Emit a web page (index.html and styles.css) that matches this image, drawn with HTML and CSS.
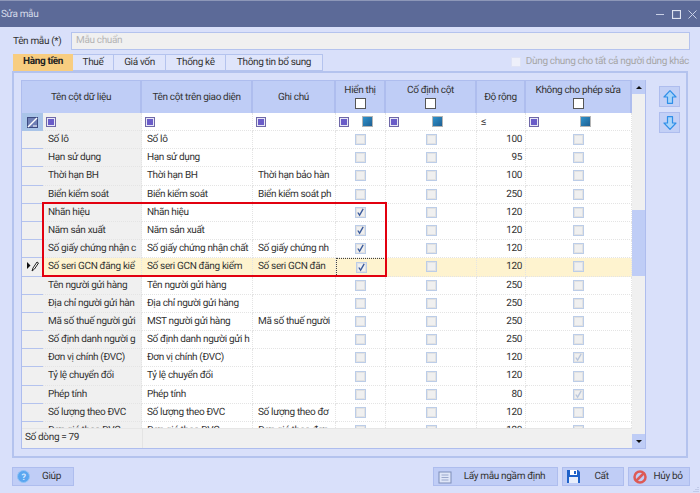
FILE: index.html
```html
<!DOCTYPE html>
<html lang="vi">
<head>
  <meta charset="UTF-8">
  <title>Sửa mẫu</title>
  <link rel="stylesheet" href="styles.css">
</head>
<body>
  <svg class="defs" width="0" height="0">
    <symbol id="i-check" viewBox="0 0 10 10"><path d="M2 5l2 3 4-7" fill="none" stroke="currentColor" stroke-width="1.5"/></symbol>
    <symbol id="i-up" viewBox="0 0 14 14"><path d="M7 .7L1 7h3.500v6.300h5V7H13z" fill="#a9d4fa" stroke="#2f8fe8" stroke-width="1.200" stroke-linejoin="round"/></symbol>
    <symbol id="i-down" viewBox="0 0 14 14"><path d="M7 13.300L1 7h3.500V.7h5V7H13z" fill="#a9d4fa" stroke="#2f8fe8" stroke-width="1.200" stroke-linejoin="round"/></symbol>
  </svg>

  <div class="window">
    <div class="titlebar">
      <span>Sửa mẫu</span>
      <div class="winbtns">
        <svg width="9" height="9" viewBox="0 0 9 9"><path d="M0 4.500h8" stroke="#c9d0e6" stroke-width="1"/></svg>
        <svg width="9" height="9" viewBox="0 0 9 9"><rect x=".5" y=".5" width="8" height="8" fill="none" stroke="#dfe3f0" stroke-width="1.200"/></svg>
        <svg width="9" height="9" viewBox="0 0 9 9"><path d="M.5.5l8 8M8.500.5l-8 8" stroke="#c9d0e6" stroke-width="1"/></svg>
      </div>
    </div>

    <div class="content">
      <div class="name-row">
        <label>Tên mẫu (*)</label>
        <div class="name-input">Mẫu chuẩn</div>
      </div>

      <div class="tab-row">
        <div class="tabs">
          <div class="tab tab-on">Hàng tiền</div>
          <div class="tab t2">Thuế</div>
          <div class="tab t3">Giá vốn</div>
          <div class="tab t4">Thống kê</div>
          <div class="tab t5">Thông tin bổ sung</div>
        </div>
        <div class="share"><span class="share-box"></span>Dùng chung cho tất cả người dùng khác</div>
      </div>

      <div class="panel">
        <div class="grid">
          <div class="grid-main">
            <div class="row-head">
              <div class="hc span2">Tên cột dữ liệu</div>
              <div class="hc">Tên cột trên giao diện</div>
              <div class="hc">Ghi chú</div>
              <div class="hc">Hiển thị<span class="head-box"></span></div>
              <div class="hc">Cố định cột<span class="head-box"></span></div>
              <div class="hc">Độ rộng</div>
              <div class="hc">Không cho phép sửa<span class="head-box"></span></div>
            </div>

            <div class="row-filter">
              <div class="fc-ind"><svg width="11" height="11" viewBox="0 0 11 11"><rect x=".5" y=".5" width="10" height="10" fill="#6f7fb5" stroke="#3c4a80"/><path d="M1 10L10 1" stroke="#fff" stroke-width="1.400"/><path d="M6 9h4" stroke="#fff"/></svg></div>
              <div class="fc"><span class="fi"></span></div>
              <div class="fc"><span class="fi"></span></div>
              <div class="fc"><span class="fi"></span></div>
              <div class="fc fc-two"><span class="fi"></span><span class="fb"></span></div>
              <div class="fc fc-two fc-five"><span class="fi"></span><span class="fb"></span></div>
              <div class="fc fc-le">≤</div>
              <div class="fc fc-two fc-seven"><span class="fi"></span><span class="fb"></span></div>
            </div>

            <div class="rows">
              <div class="row"><div class="ind"></div><div class="c c1">Số lô</div><div class="c">Số lô</div><div class="c"></div><div class="c cc"><i class="cb"></i></div><div class="c cc"><i class="cb"></i></div><div class="c num">100</div><div class="c cc"><i class="cb"></i></div></div>
              <div class="row"><div class="ind"></div><div class="c c1">Hạn sử dụng</div><div class="c">Hạn sử dụng</div><div class="c"></div><div class="c cc"><i class="cb"></i></div><div class="c cc"><i class="cb"></i></div><div class="c num">95</div><div class="c cc"><i class="cb"></i></div></div>
              <div class="row"><div class="ind"></div><div class="c c1">Thời hạn BH</div><div class="c">Thời hạn BH</div><div class="c">Thời hạn bảo hàn</div><div class="c cc"><i class="cb"></i></div><div class="c cc"><i class="cb"></i></div><div class="c num">100</div><div class="c cc"><i class="cb"></i></div></div>
              <div class="row"><div class="ind"></div><div class="c c1">Biển kiểm soát</div><div class="c">Biển kiểm soát</div><div class="c">Biển kiểm soát ph</div><div class="c cc"><i class="cb"></i></div><div class="c cc"><i class="cb"></i></div><div class="c num">250</div><div class="c cc"><i class="cb"></i></div></div>
              <div class="row"><div class="ind"></div><div class="c c1">Nhãn hiệu</div><div class="c">Nhãn hiệu</div><div class="c"></div><div class="c cc"><i class="cb on"><svg><use href="#i-check"/></svg></i></div><div class="c cc"><i class="cb"></i></div><div class="c num">120</div><div class="c cc"><i class="cb"></i></div></div>
              <div class="row"><div class="ind"></div><div class="c c1">Năm sản xuất</div><div class="c">Năm sản xuất</div><div class="c"></div><div class="c cc"><i class="cb on"><svg><use href="#i-check"/></svg></i></div><div class="c cc"><i class="cb"></i></div><div class="c num">120</div><div class="c cc"><i class="cb"></i></div></div>
              <div class="row"><div class="ind"></div><div class="c c1">Số giấy chứng nhận c</div><div class="c">Số giấy chứng nhận chất</div><div class="c">Số giấy chứng nh</div><div class="c cc"><i class="cb on"><svg><use href="#i-check"/></svg></i></div><div class="c cc"><i class="cb"></i></div><div class="c num">120</div><div class="c cc"><i class="cb"></i></div></div>
              <div class="row row-sel"><div class="ind"><svg width="12" height="11" viewBox="0 0 12 11"><path d="M0 1l3.500 3.500L0 8z" fill="#111"/><path d="M5 10l1-3 4-6 1.500 1-4 6z" fill="#fff" stroke="#222"/></svg></div><div class="c c1">Số seri GCN đăng kiể</div><div class="c">Số seri GCN đăng kiểm</div><div class="c">Số seri GCN đăn</div><div class="c cc c-focus"><i class="cb on"><svg><use href="#i-check"/></svg></i></div><div class="c cc"><i class="cb"></i></div><div class="c num">120</div><div class="c cc"><i class="cb"></i></div></div>
              <div class="row"><div class="ind"></div><div class="c c1">Tên người gửi hàng</div><div class="c">Tên người gửi hàng</div><div class="c"></div><div class="c cc"><i class="cb"></i></div><div class="c cc"><i class="cb"></i></div><div class="c num">250</div><div class="c cc"><i class="cb"></i></div></div>
              <div class="row"><div class="ind"></div><div class="c c1">Địa chỉ người gửi hàn</div><div class="c">Địa chỉ người gửi hàng</div><div class="c"></div><div class="c cc"><i class="cb"></i></div><div class="c cc"><i class="cb"></i></div><div class="c num">250</div><div class="c cc"><i class="cb"></i></div></div>
              <div class="row"><div class="ind"></div><div class="c c1">Mã số thuế người gửi</div><div class="c">MST người gửi hàng</div><div class="c">Mã số thuế người</div><div class="c cc"><i class="cb"></i></div><div class="c cc"><i class="cb"></i></div><div class="c num">250</div><div class="c cc"><i class="cb"></i></div></div>
              <div class="row"><div class="ind"></div><div class="c c1">Số định danh người g</div><div class="c">Số định danh người gửi h</div><div class="c"></div><div class="c cc"><i class="cb"></i></div><div class="c cc"><i class="cb"></i></div><div class="c num">250</div><div class="c cc"><i class="cb"></i></div></div>
              <div class="row"><div class="ind"></div><div class="c c1">Đơn vị chính (ĐVC)</div><div class="c">Đơn vị chính (ĐVC)</div><div class="c"></div><div class="c cc"><i class="cb"></i></div><div class="c cc"><i class="cb"></i></div><div class="c num">120</div><div class="c cc"><i class="cb off"><svg><use href="#i-check"/></svg></i></div></div>
              <div class="row"><div class="ind"></div><div class="c c1">Tỷ lệ chuyển đổi</div><div class="c">Tỷ lệ chuyển đổi</div><div class="c"></div><div class="c cc"><i class="cb"></i></div><div class="c cc"><i class="cb"></i></div><div class="c num">120</div><div class="c cc"><i class="cb"></i></div></div>
              <div class="row"><div class="ind"></div><div class="c c1">Phép tính</div><div class="c">Phép tính</div><div class="c"></div><div class="c cc"><i class="cb"></i></div><div class="c cc"><i class="cb"></i></div><div class="c num">80</div><div class="c cc"><i class="cb off"><svg><use href="#i-check"/></svg></i></div></div>
              <div class="row"><div class="ind"></div><div class="c c1">Số lượng theo ĐVC</div><div class="c">Số lượng theo ĐVC</div><div class="c">Số lượng theo đơ</div><div class="c cc"><i class="cb"></i></div><div class="c cc"><i class="cb"></i></div><div class="c num">120</div><div class="c cc"><i class="cb"></i></div></div>
              <div class="row"><div class="ind"></div><div class="c c1">Đơn giá theo ĐVC</div><div class="c">Đơn giá theo ĐVC</div><div class="c">Đơn giá theo đơn</div><div class="c cc"><i class="cb"></i></div><div class="c cc"><i class="cb"></i></div><div class="c num">120</div><div class="c cc"><i class="cb"></i></div></div>
            </div>

            <div class="row-foot">
              <div class="foot-count">Số dòng = 79</div>
            </div>
          </div>

          <div class="scroll">
            <div class="sb-btn"><span class="tri-up"></span></div>
            <div class="sb-track"><div class="sb-thumb"></div></div>
            <div class="sb-btn"><span class="tri-down"></span></div>
          </div>

          <!-- khung đỏ đánh dấu 4 dòng -->
          <div class="red-mark"></div>
        </div>

        <div class="move-btns">
          <div class="move-btn"><svg width="14" height="14"><use href="#i-up"/></svg></div>
          <div class="move-btn"><svg width="14" height="14"><use href="#i-down"/></svg></div>
        </div>
      </div>

      <div class="bottom">
        <div class="btn btn-help">
          <svg width="13" height="13" viewBox="0 0 13 13"><circle cx="6.500" cy="6.500" r="6" fill="#5aa6f0" stroke="#8fc2f5"/><text x="6.500" y="10" text-anchor="middle" class="q-mark">?</text></svg>
          <span>Giúp</span>
        </div>
        <div class="bottom-right">
          <div class="btn btn-default">
            <svg width="14" height="14" viewBox="0 0 14 14"><rect x="1" y="2" width="12" height="11" fill="#dfe6f8" stroke="#7d8db8"/><path d="M3.500 5h7M3.500 7.500h7M3.500 10h7" stroke="#9aa8cc"/></svg>
            <span>Lấy mẫu ngầm định</span>
          </div>
          <div class="btn btn-save">
            <svg width="13" height="13" viewBox="0 0 13 13"><path d="M0 0h11l2 2v11H0z" fill="#1f62c9"/><rect x="3" y="0" width="7" height="5" fill="#fff"/><rect x="7" y="1" width="2" height="3" fill="#1f62c9"/><rect x="2" y="7" width="9" height="6" fill="#e8eefb"/></svg>
            <span>Cất</span>
          </div>
          <div class="btn btn-cancel">
            <svg width="14" height="14" viewBox="0 0 14 14"><circle cx="7" cy="7" r="5.500" fill="none" stroke="#dd5a55" stroke-width="2.500"/><path d="M3.500 10.500l7-7" stroke="#dd5a55" stroke-width="2.500"/></svg>
            <span>Hủy bỏ</span>
          </div>
        </div>
      </div>
    </div>

    <svg class="grip" width="6" height="6" viewBox="0 0 6 6"><path d="M5 1v1M3 3v1M5 3v1M1 5v1M3 5v1M5 5v1" stroke="#a9b4d6"/></svg>
  </div>
</body>
</html>
```

FILE: styles.css
```css
* { box-sizing: border-box; }
html, body { margin: 0; padding: 0; }
body { font-family: Roboto, "Liberation Sans", Arial, sans-serif; font-size: 10px; letter-spacing: -0.35px; color: #333; text-rendering: geometricPrecision; }
.defs { position: absolute; }

.window { position: relative; width: 700px; height: 493px; overflow: hidden; background-color: #d9e0fa; }
.grip { position: absolute; right: 1px; bottom: 1px; }

/* title */
.titlebar {
  height: 27px;
  padding: 0 3px 0 1px;
  display: flex;
  align-items: center;
  justify-content: space-between;
  background-color: #5c6a98;
  border-top: 1px solid #8d97b8;
  color: #d5daea;
}
.winbtns { display: flex; gap: 7px; }

.content { padding: 5px 10px 0 12px; }

/* ten mau */
.name-row { display: flex; align-items: center; height: 18px; }
.name-row label { width: 59px; padding-left: 1px; white-space: nowrap; }
.name-input {
  flex: 1;
  height: 18px;
  line-height: 15px;
  padding-left: 4px;
  background-color: #f0f0f0;
  border: 1px solid #b4c3ee;
  color: #b5b5b5;
}

/* tabs */
.tab-row { display: flex; justify-content: space-between; height: 17px; margin-top: 4px; }
.tabs { display: flex; padding-left: 1px; }
.tab {
  height: 17px;
  line-height: 16px;
  text-align: center;
  border: 1px solid #b4c3ee;
  border-left: 0;
  background-color: #dfe5fb;
}
.tab-on { width: 60px; background-color: #f8cd80; border: 0; font-weight: bold; color: #222; }
.t2 { width: 41px; }
.t3 { width: 52px; }
.t4 { width: 60px; }
.t5 { width: 97px; }
.share { display: flex; align-items: center; gap: 5px; color: #a6a6a6; padding-bottom: 2px; padding-right: 1px; }
.share-box { width: 10px; height: 10px; background-color: #eef0fa; border: 1px solid #dfe3f5; }

/* panel */
.panel {
  display: flex;
  width: 676px;
  height: 387px;
  padding: 7px 0 7px 7px;
  border: 2px solid #b4c3ee;
}

.grid {
  position: relative;
  display: flex;
  width: 625px;
  height: 369px;
  border: 1px solid #aebdee;
  border-top: 0;
  background-color: #fff;
}
.grid-main { width: 610px; display: flex; flex-direction: column; }

.row-head, .row-filter, .row {
  display: grid;
  grid-template-columns: 21px 99px 111px 83px 50px 91px 49px 106px;
}

.row-head { height: 33px; background-color: #bfcdf6; }
.hc {
  display: flex;
  flex-direction: column;
  align-items: center;
  justify-content: center;
  border-right: 2px solid #aebdee;
  border-top: 1px solid #aebdee;
  color: #333;
}
.span2 { grid-column: span 2; }
.head-box { width: 11px; height: 11px; margin-top: 2px; background-color: #fff; border: 1px solid #555; }

.row-filter { height: 18px; background-color: #fff; }
.fc-ind { display: flex; align-items: center; justify-content: center; background-color: #a9c4e8; }
.fc { display: flex; align-items: center; padding-left: 3px; border-right: 1px dotted #e4e4e4; border-bottom: 1px dotted #e4e4e4; }
.fc:nth-child(2) { background-color: #f0f0f0; }
.fi { width: 10px; height: 10px; background-color: #6a5cc8; border: 2px solid #e8e8f5; outline: 1px solid #6f68a8; outline-offset: -1px; }
.fb {
  width: 11px;
  height: 11px;
  background: linear-gradient(135deg, #2f93cc, #1f5f92);
  border: 1px solid #b5b5b5;
}
.fc-two { justify-content: space-between; padding-right: 12px; }
.fc-five { padding-right: 33px; }
.fc-seven { padding-right: 40px; }
.fc-le { font-size: 11px; padding-left: 4px; }

.rows { flex: 1; height: 298px; overflow: hidden; }
.row { height: 18.2px; background-color: #fff; }
.ind { display: flex; align-items: center; justify-content: center; background-color: #f0f0f0; border-bottom: 1px solid #b4c3ee; }
.c {
  padding-left: 5px;
  line-height: 17px;
  white-space: nowrap;
  overflow: hidden;
  border-right: 1px dotted #e4e4e4;
  border-bottom: 1px dotted #e4e4e4;
}
.c1 { background-color: #f0f0f0; }
.cc { display: flex; align-items: center; justify-content: center; padding-left: 0; }
.num { text-align: right; padding-right: 3px; }
.row-sel .c, .row-sel .c1 { background-color: #fef3cf; }
.c-focus { border: 1px dotted #444; }

.cb {
  display: block;
  width: 11px;
  height: 11px;
  background-color: #f0f0f0;
  border: 1px solid #bccde8;
  box-shadow: inset 0 0 0 1px #e2e2e2;
}
.cb svg { display: block; width: 9px; height: 9px; }
.cb.on { color: #3a5a9c; }
.cb.off { color: #b9c6dc; }

.row-foot { height: 20px; background-color: #f0f0f0; border-top: 1px solid #e6e6e6; display: flex; }
.foot-count { width: 121px; line-height: 18px; padding-left: 3px; border-right: 1px solid #e4e4e4; }

/* scrollbar */
.scroll { width: 14px; display: flex; flex-direction: column; background-color: #f0f0f0; }
.sb-btn { height: 14px; display: flex; align-items: center; justify-content: center; background-color: #bfcdf6; }
.tri-up { border: 3px solid transparent; border-top: 0; border-bottom: 3px solid #111; }
.tri-down { border: 3px solid transparent; border-bottom: 0; border-top: 3px solid #111; }
.sb-track { flex: 1; padding-top: 116px; }
.sb-thumb { height: 66px; background-color: #bfcdf6; }

.red-mark {
  position: absolute;
  left: 20px;
  top: 122px;
  width: 345px;
  height: 75px;
  border: 2px solid #e2000f;
}

.move-btns { display: flex; flex-direction: column; gap: 5px; margin: 6px 0 0 13px; }
.move-btn {
  width: 21px;
  height: 21px;
  display: flex;
  align-items: center;
  justify-content: center;
  background-color: #c3d0f6;
  border: 1px solid #aebdee;
}

/* buttons */
.bottom { display: flex; justify-content: space-between; margin-top: 9px; width: 678px; }
.bottom-right { display: flex; gap: 4px; }
.btn {
  position: relative;
  height: 19px;
  display: flex;
  align-items: center;
  padding-left: 4px;
  background-color: #c0cdf6;
  border: 1px solid #aebdee;
}
.btn span { flex: 1; text-align: center; color: #333; }
.btn-help { width: 62px; }
.btn-default { width: 125px; }
.btn-save { width: 62px; }
.btn-cancel { width: 62px; }
.q-mark { font-size: 9px; font-weight: bold; fill: #d8ebff; }
```
